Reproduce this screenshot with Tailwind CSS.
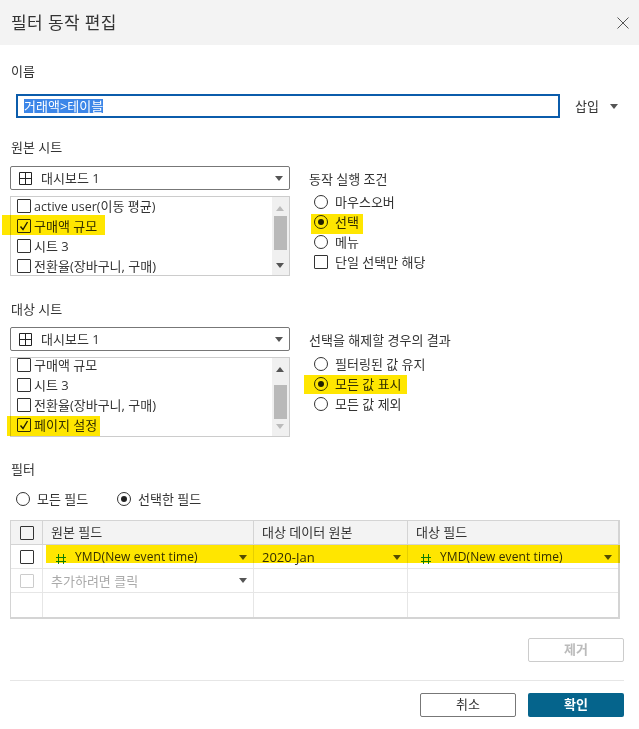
<!DOCTYPE html>
<html lang="ko"><head><meta charset="utf-8">
<script src="https://cdn.jsdelivr.net/npm/@tailwindcss/browser@4"></script>
</head>
<body class="bg-white">
<div class="relative w-[639px] h-[729px] overflow-hidden bg-white text-[13px] leading-[18px] text-[#333] font-['Open_Sans','Noto_Sans_CJK_KR',sans-serif]">
  <header class="h-[45px] bg-[#f3f3f3] flex items-center justify-between pl-[11px] pr-[10px]">
    <h1 class="text-[17px] tracking-[0.4px] text-[#333]">필터 동작 편집</h1>
    <svg width="12" height="12" viewBox="0 0 12 12"><path d="M0.5 0.5L11.5 11.5M11.5 0.5L0.5 11.5" stroke="#555" stroke-width="1" fill="none"/></svg>
  </header>

  <main class="px-[10px]">
    <div class="mt-[17px] pl-[1px] h-[18px]">이름</div>
    <div class="mt-[14px] ml-[6px] flex items-center h-[24px]">
      <div class="w-[544px] h-[24px] border-2 border-[#0b5cab] pl-[6px] flex items-center"><span class="bg-[#3c86e8] text-white text-[13px] leading-[14px] h-[14px] flex items-center">거래액&gt;테이블</span></div>
      <span class="ml-[15px]">삽입</span>
      <svg width="8" height="5" viewBox="0 0 8 5" class="ml-[11px]"><path d="M0 0H8L4 5Z" fill="#555"/></svg>
    </div>

    <div class="mt-[20px] pl-[1px] h-[18px]">원본 시트</div>
    <section class="mt-[10px] flex">
      <div class="w-[280px]">
        <div class="h-[24px] border border-[#777] rounded-[2px] flex items-center pl-[8px] pr-[6px]">
          <svg width="13" height="13" viewBox="0 0 13 13"><path d="M.5.5h12v12H.5zM6.5.5v12M.5 6.5h12" fill="none" stroke="#222"/></svg>
          <span class="ml-[9px] flex-1">대시보드 1</span>
          <svg width="8" height="5" viewBox="0 0 8 5"><path d="M0 0H8L4 5Z" fill="#555"/></svg>
        </div>
        <div class="mt-[6px] h-[80px] border border-[#ccc] flex overflow-hidden">
          <div class="flex-1 -mt-[1px] pl-[6px]">
            <label class="h-[20px] flex items-center gap-[3px]"><span class="w-[14px] h-[14px] border border-[#333] rounded-[1px]"></span><span><span class="text-[12.5px]">active user(</span>이동 평균<span class="text-[12.5px]">)</span></span></label>
            <label class="h-[20px] flex items-center gap-[3px]"><span class="w-[14px] h-[14px] border border-[#333] rounded-[1px] flex items-center justify-center"><svg width="10" height="10" viewBox="0 0 10 10"><path d="M1.5 5.5L4 8.5L8.5 1" fill="none" stroke="#222" stroke-width="1.4"/></svg></span>구매액 규모</label>
            <label class="h-[20px] flex items-center gap-[3px]"><span class="w-[14px] h-[14px] border border-[#333] rounded-[1px]"></span>시트 3</label>
            <label class="h-[20px] flex items-center gap-[3px]"><span class="w-[14px] h-[14px] border border-[#333] rounded-[1px]"></span>전환율(장바구니, 구매)</label>
          </div>
          <div class="w-[17px] bg-[#f0f0f0] flex flex-col items-center pt-[9px] pb-[7px] pr-[1px]">
            <svg width="8" height="5" viewBox="0 0 8 5"><path d="M0 5H8L4 0Z" fill="#bbb"/></svg>
            <div class="w-[13px] h-[34px] bg-[#b9b9b9] mt-[5px]"></div>
            <svg width="8" height="5" viewBox="0 0 8 5" class="mt-auto"><path d="M0 0H8L4 5Z" fill="#555"/></svg>
          </div>
        </div>
      </div>
      <div class="ml-[19px] pt-[4px] w-[300px]">
        <div class="h-[18px]">동작 실행 조건</div>
        <div class="mt-[6px] ml-[5px] flex flex-col gap-[5px]">
          <label class="h-[15px] flex items-center gap-[7px]"><span class="w-[14px] h-[14px] rounded-full border border-[#333]"></span>마우스오버</label>
          <label class="h-[15px] flex items-center gap-[7px]"><span class="w-[14px] h-[14px] rounded-full border border-[#333] flex items-center justify-center"><span class="w-[6px] h-[6px] rounded-full bg-[#222]"></span></span>선택</label>
          <label class="h-[15px] flex items-center gap-[7px]"><span class="w-[14px] h-[14px] rounded-full border border-[#333]"></span>메뉴</label>
          <label class="h-[15px] flex items-center gap-[7px]"><span class="w-[14px] h-[14px] rounded-[1px] border border-[#333]"></span>단일 선택만 해당</label>
        </div>
      </div>
    </section>

    <div class="mt-[24px] pl-[1px] h-[18px]">대상 시트</div>
    <section class="mt-[9px] flex">
      <div class="w-[280px]">
        <div class="h-[24px] border border-[#777] rounded-[2px] flex items-center pl-[8px] pr-[6px]">
          <svg width="13" height="13" viewBox="0 0 13 13"><path d="M.5.5h12v12H.5zM6.5.5v12M.5 6.5h12" fill="none" stroke="#222"/></svg>
          <span class="ml-[9px] flex-1">대시보드 1</span>
          <svg width="8" height="5" viewBox="0 0 8 5"><path d="M0 0H8L4 5Z" fill="#555"/></svg>
        </div>
        <div class="mt-[6px] h-[80px] border border-[#ccc] flex overflow-hidden">
          <div class="flex-1 -mt-[3px] pl-[6px]">
            <label class="h-[20px] flex items-center gap-[3px]"><span class="w-[14px] h-[14px] border border-[#333] rounded-[1px]"></span>구매액 규모</label>
            <label class="h-[20px] flex items-center gap-[3px]"><span class="w-[14px] h-[14px] border border-[#333] rounded-[1px]"></span>시트 3</label>
            <label class="h-[20px] flex items-center gap-[3px]"><span class="w-[14px] h-[14px] border border-[#333] rounded-[1px]"></span>전환율(장바구니, 구매)</label>
            <label class="h-[20px] flex items-center gap-[3px]"><span class="w-[14px] h-[14px] border border-[#333] rounded-[1px] flex items-center justify-center"><svg width="10" height="10" viewBox="0 0 10 10"><path d="M1.5 5.5L4 8.5L8.5 1" fill="none" stroke="#222" stroke-width="1.4"/></svg></span>페이지 설정</label>
          </div>
          <div class="w-[17px] bg-[#f0f0f0] flex flex-col items-center pt-[9px] pb-[7px] pr-[1px]">
            <svg width="8" height="5" viewBox="0 0 8 5"><path d="M0 5H8L4 0Z" fill="#555"/></svg>
            <div class="w-[13px] h-[34px] bg-[#b9b9b9] mt-[13px]"></div>
            <svg width="8" height="5" viewBox="0 0 8 5" class="mt-auto"><path d="M0 0H8L4 5Z" fill="#bbb"/></svg>
          </div>
        </div>
      </div>
      <div class="ml-[19px] pt-[4px] w-[300px]">
        <div class="h-[18px]">선택을 해제할 경우의 결과</div>
        <div class="mt-[7px] ml-[5px] flex flex-col gap-[5px]">
          <label class="h-[15px] flex items-center gap-[7px]"><span class="w-[14px] h-[14px] rounded-full border border-[#333]"></span>필터링된 값 유지</label>
          <label class="h-[15px] flex items-center gap-[7px]"><span class="w-[14px] h-[14px] rounded-full border border-[#333] flex items-center justify-center"><span class="w-[6px] h-[6px] rounded-full bg-[#222]"></span></span>모든 값 표시</label>
          <label class="h-[15px] flex items-center gap-[7px]"><span class="w-[14px] h-[14px] rounded-full border border-[#333]"></span>모든 값 제외</label>
        </div>
      </div>
    </section>

    <div class="mt-[23px] pl-[1px] h-[18px]">필터</div>
    <div class="mt-[13px] ml-[6px] h-[15px] flex">
      <label class="w-[101px] flex items-center gap-[7px]"><span class="w-[14px] h-[14px] rounded-full border border-[#333]"></span>모든 필드</label>
      <label class="flex items-center gap-[7px]"><span class="w-[14px] h-[14px] rounded-full border border-[#333] flex items-center justify-center"><span class="w-[6px] h-[6px] rounded-full bg-[#222]"></span></span>선택한 필드</label>
    </div>

    <div class="mt-[14px] w-[610px] border border-[#d4d4d4] border-r-2 border-b-2 grid grid-cols-[32px_211px_154px_1fr] grid-rows-[24px_24px_24px_24px]">
      <div class="bg-[#f3f3f3] border-r border-b border-[#d4d4d4] flex items-center justify-center"><span class="w-[14px] h-[14px] border border-[#333] rounded-[1px]"></span></div>
      <div class="bg-[#f3f3f3] border-r border-b border-[#d4d4d4] flex items-center pl-[8px] pb-[2px]">원본 필드</div>
      <div class="bg-[#f3f3f3] border-r border-b border-[#d4d4d4] flex items-center pl-[8px] pb-[2px]">대상 데이터 원본</div>
      <div class="bg-[#f3f3f3] border-b border-[#d4d4d4] flex items-center pl-[8px] pb-[2px]">대상 필드</div>

      <div class="border-r border-b border-[#e6e6e6] flex items-center justify-center"><span class="w-[14px] h-[14px] border border-[#333] rounded-[1px]"></span></div>
      <div class="border-r border-b border-[#e6e6e6] flex items-center pl-[13px] pr-[6px]">
        <svg width="10" height="10" viewBox="0 0 10 10" class="mt-[5px]"><path d="M2.5 0v10M7.5 0v10M0 3.5h10M0 7.5h10" stroke="#0d8a3a" fill="none"/></svg>
        <span class="ml-[9px] flex-1 text-[12px] tracking-[0.1px] pt-[1px]">YMD(New event time)</span>
        <svg width="8" height="5" viewBox="0 0 8 5" class="mt-[1px]"><path d="M0 0H8L4 5Z" fill="#555"/></svg>
      </div>
      <div class="border-r border-b border-[#e6e6e6] flex items-center pl-[8px] pr-[6px]"><span class="flex-1 pt-[1px]">2020-Jan</span><svg width="8" height="5" viewBox="0 0 8 5" class="mt-[1px]"><path d="M0 0H8L4 5Z" fill="#555"/></svg></div>
      <div class="border-b border-[#e6e6e6] flex items-center pl-[13px] pr-[6px]">
        <svg width="10" height="10" viewBox="0 0 10 10" class="mt-[5px]"><path d="M2.5 0v10M7.5 0v10M0 3.5h10M0 7.5h10" stroke="#0d8a3a" fill="none"/></svg>
        <span class="ml-[9px] flex-1 text-[12px] tracking-[0.1px] pt-[1px]">YMD(New event time)</span>
        <svg width="8" height="5" viewBox="0 0 8 5" class="mt-[1px]"><path d="M0 0H8L4 5Z" fill="#555"/></svg>
      </div>

      <div class="border-r border-b border-[#e6e6e6] flex items-center justify-center"><span class="w-[14px] h-[14px] border border-[#ccc] rounded-[1px]"></span></div>
      <div class="border-r border-b border-[#e6e6e6] flex items-center pl-[8px] pr-[6px] text-[#aaa]"><span class="flex-1">추가하려면 클릭</span><svg width="8" height="5" viewBox="0 0 8 5"><path d="M0 0H8L4 5Z" fill="#555"/></svg></div>
      <div class="border-r border-b border-[#e6e6e6]"></div>
      <div class="border-b border-[#e6e6e6]"></div>

      <div class="border-r border-[#e6e6e6]"></div>
      <div class="border-r border-[#e6e6e6]"></div>
      <div class="border-r border-[#e6e6e6]"></div>
      <div></div>
    </div>

    <div class="mt-[19px] flex justify-end w-[614px]">
      <button class="w-[96px] h-[24px] border border-[#ccc] rounded-[2px] text-[#bbb] font-bold pb-[2px]">제거</button>
    </div>
    <div class="mt-[18px] w-[614px] h-px bg-[#e6e6e6]"></div>
    <div class="mt-[12px] w-[614px] flex justify-end gap-[12px]">
      <button class="w-[96px] h-[24px] border border-[#777] rounded-[2px] text-[#333] pb-[2px]">취소</button>
      <button class="w-[96px] h-[24px] rounded-[2px] bg-[#05648c] text-white font-bold pb-[2px]">확인</button>
    </div>
  </main>

  <div class="absolute left-[2px] top-[215px] w-[103px] h-[20px] bg-[#ffe600] mix-blend-multiply"></div>
  <div class="absolute left-[311px] top-[214px] w-[52px] h-[20px] bg-[#ffe600] mix-blend-multiply"></div>
  <div class="absolute left-[7px] top-[416px] w-[93px] h-[20px] bg-[#ffe600] mix-blend-multiply"></div>
  <div class="absolute left-[304px] top-[375px] w-[103px] h-[19px] bg-[#ffe600] mix-blend-multiply"></div>
  <div class="absolute left-[46px] top-[545px] w-[574px] h-[18px] bg-[#ffe600] mix-blend-multiply"></div>
</div>
</body></html>
